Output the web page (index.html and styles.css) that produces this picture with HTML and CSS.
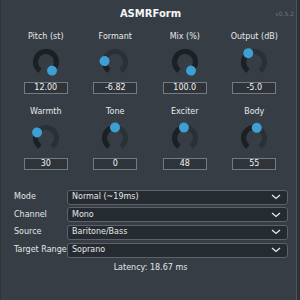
FILE: index.html
```html
<!DOCTYPE html>
<html>
<head>
<meta charset="utf-8">
<link rel="stylesheet" href="styles.css">
</head>
<body>
<div class="app">
  <header class="title-bar">
    <span></span>
    <h1 class="title">ASMRForm</h1>
    <span class="version">v0.5.2</span>
  </header>

  <div class="knobs">
    <div class="knob">
      <div class="knob-label">Pitch (st)</div>
      <svg class="dial" viewBox="0 0 32 32" width="32" height="32">
        <circle class="track" cx="16" cy="16" r="10.5" pathLength="360" transform="rotate(125 16 16)"/>
        <circle class="fill" cx="16" cy="16" r="10.5" pathLength="360" transform="rotate(125 16 16)" style="stroke-dasharray:290 360"/>
        <circle class="dot" cx="26.5" cy="16" r="5" transform="rotate(415 16 16)"/>
      </svg>
      <div class="knob-value">12.00</div>
    </div>
    <div class="knob">
      <div class="knob-label">Formant</div>
      <svg class="dial" viewBox="0 0 32 32" width="32" height="32">
        <circle class="track" cx="16" cy="16" r="10.5" pathLength="360" transform="rotate(125 16 16)"/>
        <circle class="fill" cx="16" cy="16" r="10.5" pathLength="360" transform="rotate(125 16 16)" style="stroke-dasharray:60 360"/>
        <circle class="dot" cx="26.5" cy="16" r="5" transform="rotate(185 16 16)"/>
      </svg>
      <div class="knob-value">-6.82</div>
    </div>
    <div class="knob">
      <div class="knob-label">Mix (%)</div>
      <svg class="dial" viewBox="0 0 32 32" width="32" height="32">
        <circle class="track" cx="16" cy="16" r="10.5" pathLength="360" transform="rotate(125 16 16)"/>
        <circle class="fill" cx="16" cy="16" r="10.5" pathLength="360" transform="rotate(125 16 16)" style="stroke-dasharray:290 360"/>
        <circle class="dot" cx="26.5" cy="16" r="5" transform="rotate(415 16 16)"/>
      </svg>
      <div class="knob-value">100.0</div>
    </div>
    <div class="knob">
      <div class="knob-label">Output (dB)</div>
      <svg class="dial" viewBox="0 0 32 32" width="32" height="32">
        <circle class="track" cx="16" cy="16" r="10.5" pathLength="360" transform="rotate(125 16 16)"/>
        <circle class="fill" cx="16" cy="16" r="10.5" pathLength="360" transform="rotate(125 16 16)" style="stroke-dasharray:112 360"/>
        <circle class="dot" cx="26.5" cy="16" r="5" transform="rotate(237 16 16)"/>
      </svg>
      <div class="knob-value">-5.0</div>
    </div>

    <div class="knob">
      <div class="knob-label">Warmth</div>
      <svg class="dial" viewBox="0 0 32 32" width="32" height="32">
        <circle class="track" cx="16" cy="16" r="10.5" pathLength="360" transform="rotate(125 16 16)"/>
        <circle class="fill" cx="16" cy="16" r="10.5" pathLength="360" transform="rotate(125 16 16)" style="stroke-dasharray:87 360"/>
        <circle class="dot" cx="26.5" cy="16" r="5" transform="rotate(212 16 16)"/>
      </svg>
      <div class="knob-value">30</div>
    </div>
    <div class="knob">
      <div class="knob-label">Tone</div>
      <svg class="dial" viewBox="0 0 32 32" width="32" height="32">
        <circle class="track" cx="16" cy="16" r="10.5" pathLength="360" transform="rotate(125 16 16)"/>
        <circle class="fill" cx="16" cy="16" r="10.5" pathLength="360" transform="rotate(125 16 16)" style="stroke-dasharray:145 360"/>
        <circle class="dot" cx="26.5" cy="16" r="5" transform="rotate(270 16 16)"/>
      </svg>
      <div class="knob-value">0</div>
    </div>
    <div class="knob">
      <div class="knob-label">Exciter</div>
      <svg class="dial" viewBox="0 0 32 32" width="32" height="32">
        <circle class="track" cx="16" cy="16" r="10.5" pathLength="360" transform="rotate(125 16 16)"/>
        <circle class="fill" cx="16" cy="16" r="10.5" pathLength="360" transform="rotate(125 16 16)" style="stroke-dasharray:139 360"/>
        <circle class="dot" cx="26.5" cy="16" r="5" transform="rotate(264 16 16)"/>
      </svg>
      <div class="knob-value">48</div>
    </div>
    <div class="knob">
      <div class="knob-label">Body</div>
      <svg class="dial" viewBox="0 0 32 32" width="32" height="32">
        <circle class="track" cx="16" cy="16" r="10.5" pathLength="360" transform="rotate(125 16 16)"/>
        <circle class="fill" cx="16" cy="16" r="10.5" pathLength="360" transform="rotate(125 16 16)" style="stroke-dasharray:160 360"/>
        <circle class="dot" cx="26.5" cy="16" r="5" transform="rotate(285 16 16)"/>
      </svg>
      <div class="knob-value">55</div>
    </div>
  </div>

  <div class="selects">
    <div class="select-row">
      <span class="select-label">Mode</span>
      <div class="select"><span>Normal (~19ms)</span><svg class="chev" viewBox="0 0 10 6" width="10" height="6"><path d="M1 1 L5 4.5 L9 1"/></svg></div>
    </div>
    <div class="select-row">
      <span class="select-label">Channel</span>
      <div class="select"><span>Mono</span><svg class="chev" viewBox="0 0 10 6" width="10" height="6"><path d="M1 1 L5 4.5 L9 1"/></svg></div>
    </div>
    <div class="select-row">
      <span class="select-label">Source</span>
      <div class="select"><span>Baritone/Bass</span><svg class="chev" viewBox="0 0 10 6" width="10" height="6"><path d="M1 1 L5 4.5 L9 1"/></svg></div>
    </div>
    <div class="select-row">
      <span class="select-label">Target Range</span>
      <div class="select"><span>Soprano</span><svg class="chev" viewBox="0 0 10 6" width="10" height="6"><path d="M1 1 L5 4.5 L9 1"/></svg></div>
    </div>
  </div>

  <div class="latency">Latency: 18.67 ms</div>
</div>
</body>
</html>
```

FILE: styles.css
```css
html, body {
  margin: 0;
  padding: 0;
  background: #2c3237;
}
body {
  width: 300px;
  height: 300px;
  overflow: hidden;
  font-family: "DejaVu Sans", Verdana, sans-serif;
  color: #e4e6e8;
}
.app {
  box-sizing: border-box;
  width: 297px;
  height: 300px;
  background: #363d44;
  border-left: 1px solid #2e3439;
  border-right: 1px solid #4d545a;
  padding: 7px 0 0 10px;
}
.title-bar {
  display: grid;
  grid-template-columns: 1fr auto 1fr;
  align-items: center;
  width: 279px;
  height: 14px;
}
.title {
  margin: 0;
  font-size: 10px;
  line-height: 14px;
  font-weight: bold;
  color: #f4f5f6;
  letter-spacing: 0;
}
.version {
  justify-self: end;
  font-size: 6px;
  line-height: 8px;
  color: #6c757b;
  margin-right: -4px;
}
.knobs {
  display: grid;
  grid-template-columns: repeat(4, 69.5px);
  row-gap: 13px;
  margin-top: 10.5px;
}
.knob {
  display: flex;
  flex-direction: column;
  align-items: center;
}
.knob-label {
  font-size: 8px;
  line-height: 10px;
  height: 10px;
  color: #e6e8ea;
}
.dial {
  display: block;
  margin-top: 4.5px;
  overflow: visible;
}
.dial .track {
  fill: none;
  stroke: #2a3136;
  stroke-width: 5;
  stroke-dasharray: 290 360;
}
.dial .fill {
  fill: none;
  stroke: #1b2024;
  stroke-width: 5;
}
.dial .dot {
  fill: #3d9fd3;
}
.knob-value {
  box-sizing: border-box;
  margin-top: 4px;
  width: 44px;
  height: 12px;
  border: 1px solid #737a80;
  background: #2e3439;
  font-size: 8px;
  line-height: 10px;
  text-align: center;
  color: #f2f3f4;
}
.selects {
  display: flex;
  flex-direction: column;
  gap: 2.7px;
  margin-top: 20px;
}
.select-row {
  display: grid;
  grid-template-columns: 56px 221px;
  align-items: center;
}
.select-label {
  padding-left: 3px;
  font-size: 8px;
  line-height: 10px;
  color: #e4e6e8;
  white-space: nowrap;
}
.select {
  box-sizing: border-box;
  height: 15px;
  display: flex;
  align-items: center;
  justify-content: space-between;
  padding: 0 6px 0 4px;
  background: #252b30;
  border: 1px solid #5b6369;
  border-radius: 3px;
  font-size: 8px;
  line-height: 10px;
  color: #e6e8ea;
}
.chev {
  display: block;
}
.chev path {
  fill: none;
  stroke: #e8eaec;
  stroke-width: 1.3;
}
.latency {
  margin-top: 5px;
  width: 279px;
  text-align: center;
  font-size: 8px;
  line-height: 10px;
  color: #e4e6e8;
}
```
